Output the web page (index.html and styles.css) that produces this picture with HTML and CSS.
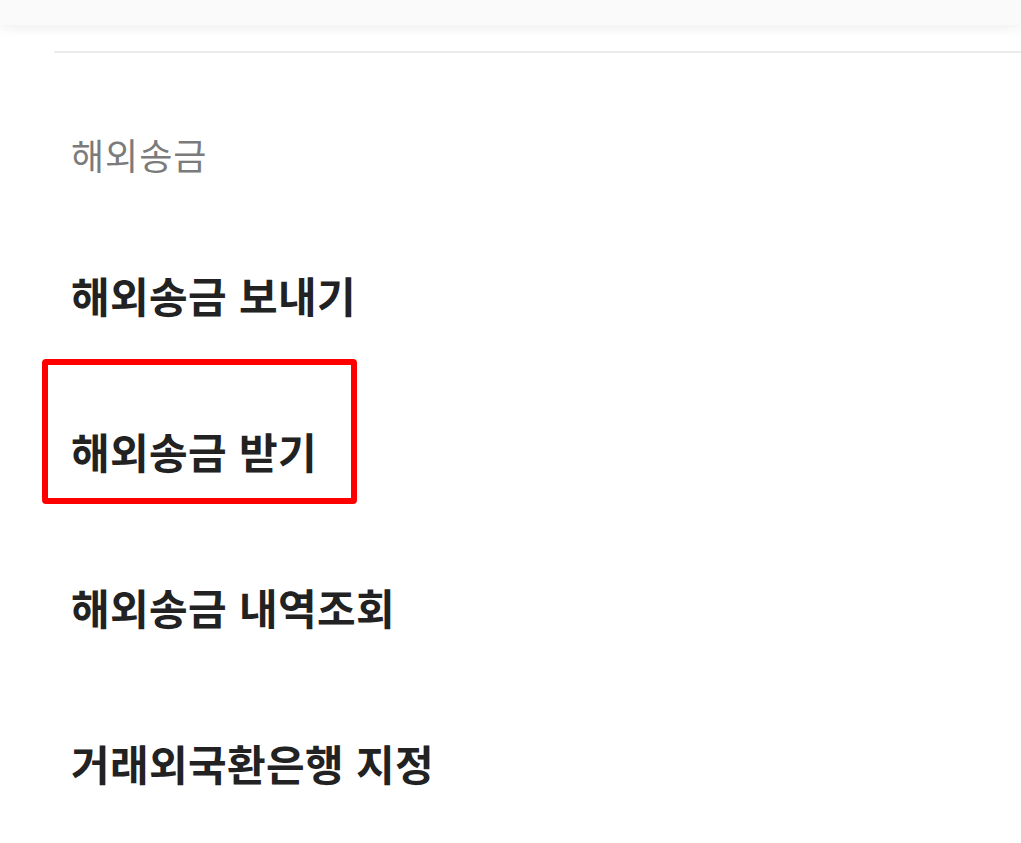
FILE: index.html
```html
<!DOCTYPE html>
<html lang="ko">
<head>
    <meta charset="UTF-8">
    <meta name="viewport" content="width=device-width, initial-scale=1.0">
    <title>해외송금</title>
    <link rel="stylesheet" href="styles.css">
</head>
<body>
    <div class="top-bar"></div>

    <div class="menu">
        <h2 class="menu-title">해외송금</h2>
        <a class="menu-item" href="#">해외송금 보내기</a>
        <a class="menu-item marked" href="#">해외송금 받기</a>
        <a class="menu-item" href="#">해외송금 내역조회</a>
        <a class="menu-item" href="#">거래외국환은행 지정</a>
    </div>
</body>
</html>
```

FILE: styles.css
```css
body {
    font-family: "Noto Sans CJK KR", "Noto Sans", sans-serif;
    background-color: white;
    margin: 0;
    padding: 0;
}
.top-bar {
    height: 25px;
    background-color: #fafafa;
    box-shadow: 0 4px 12px rgba(0, 0, 0, 0.06);
    position: relative;
    z-index: 1;
}
.menu {
    margin: 26px 0 0 54px;
    border-top: 2px solid #ebebeb;
    display: flex;
    flex-direction: column;
}
.menu-title {
    margin: 83px 0 0 0;
    padding-left: 17px;
    font-size: 36px;
    line-height: 36px;
    font-weight: 400;
    letter-spacing: 1px;
    color: #7b7b7b;
}
.menu-item {
    position: relative;
    height: 156px;
    padding-left: 17px;
    display: flex;
    align-items: center;
    font-size: 42px;
    line-height: 1;
    font-weight: 700;
    letter-spacing: 0.35px;
    color: #222;
    text-decoration: none;
}
.menu-item:first-of-type {
    margin-top: 45px;
}
/* highlight frame around the selected entry */
.menu-item.marked::after {
    content: "";
    position: absolute;
    left: -12px;
    top: -14px;
    width: 303px;
    height: 133px;
    border: 6px solid #ff0000;
    border-radius: 4px;
}
```
